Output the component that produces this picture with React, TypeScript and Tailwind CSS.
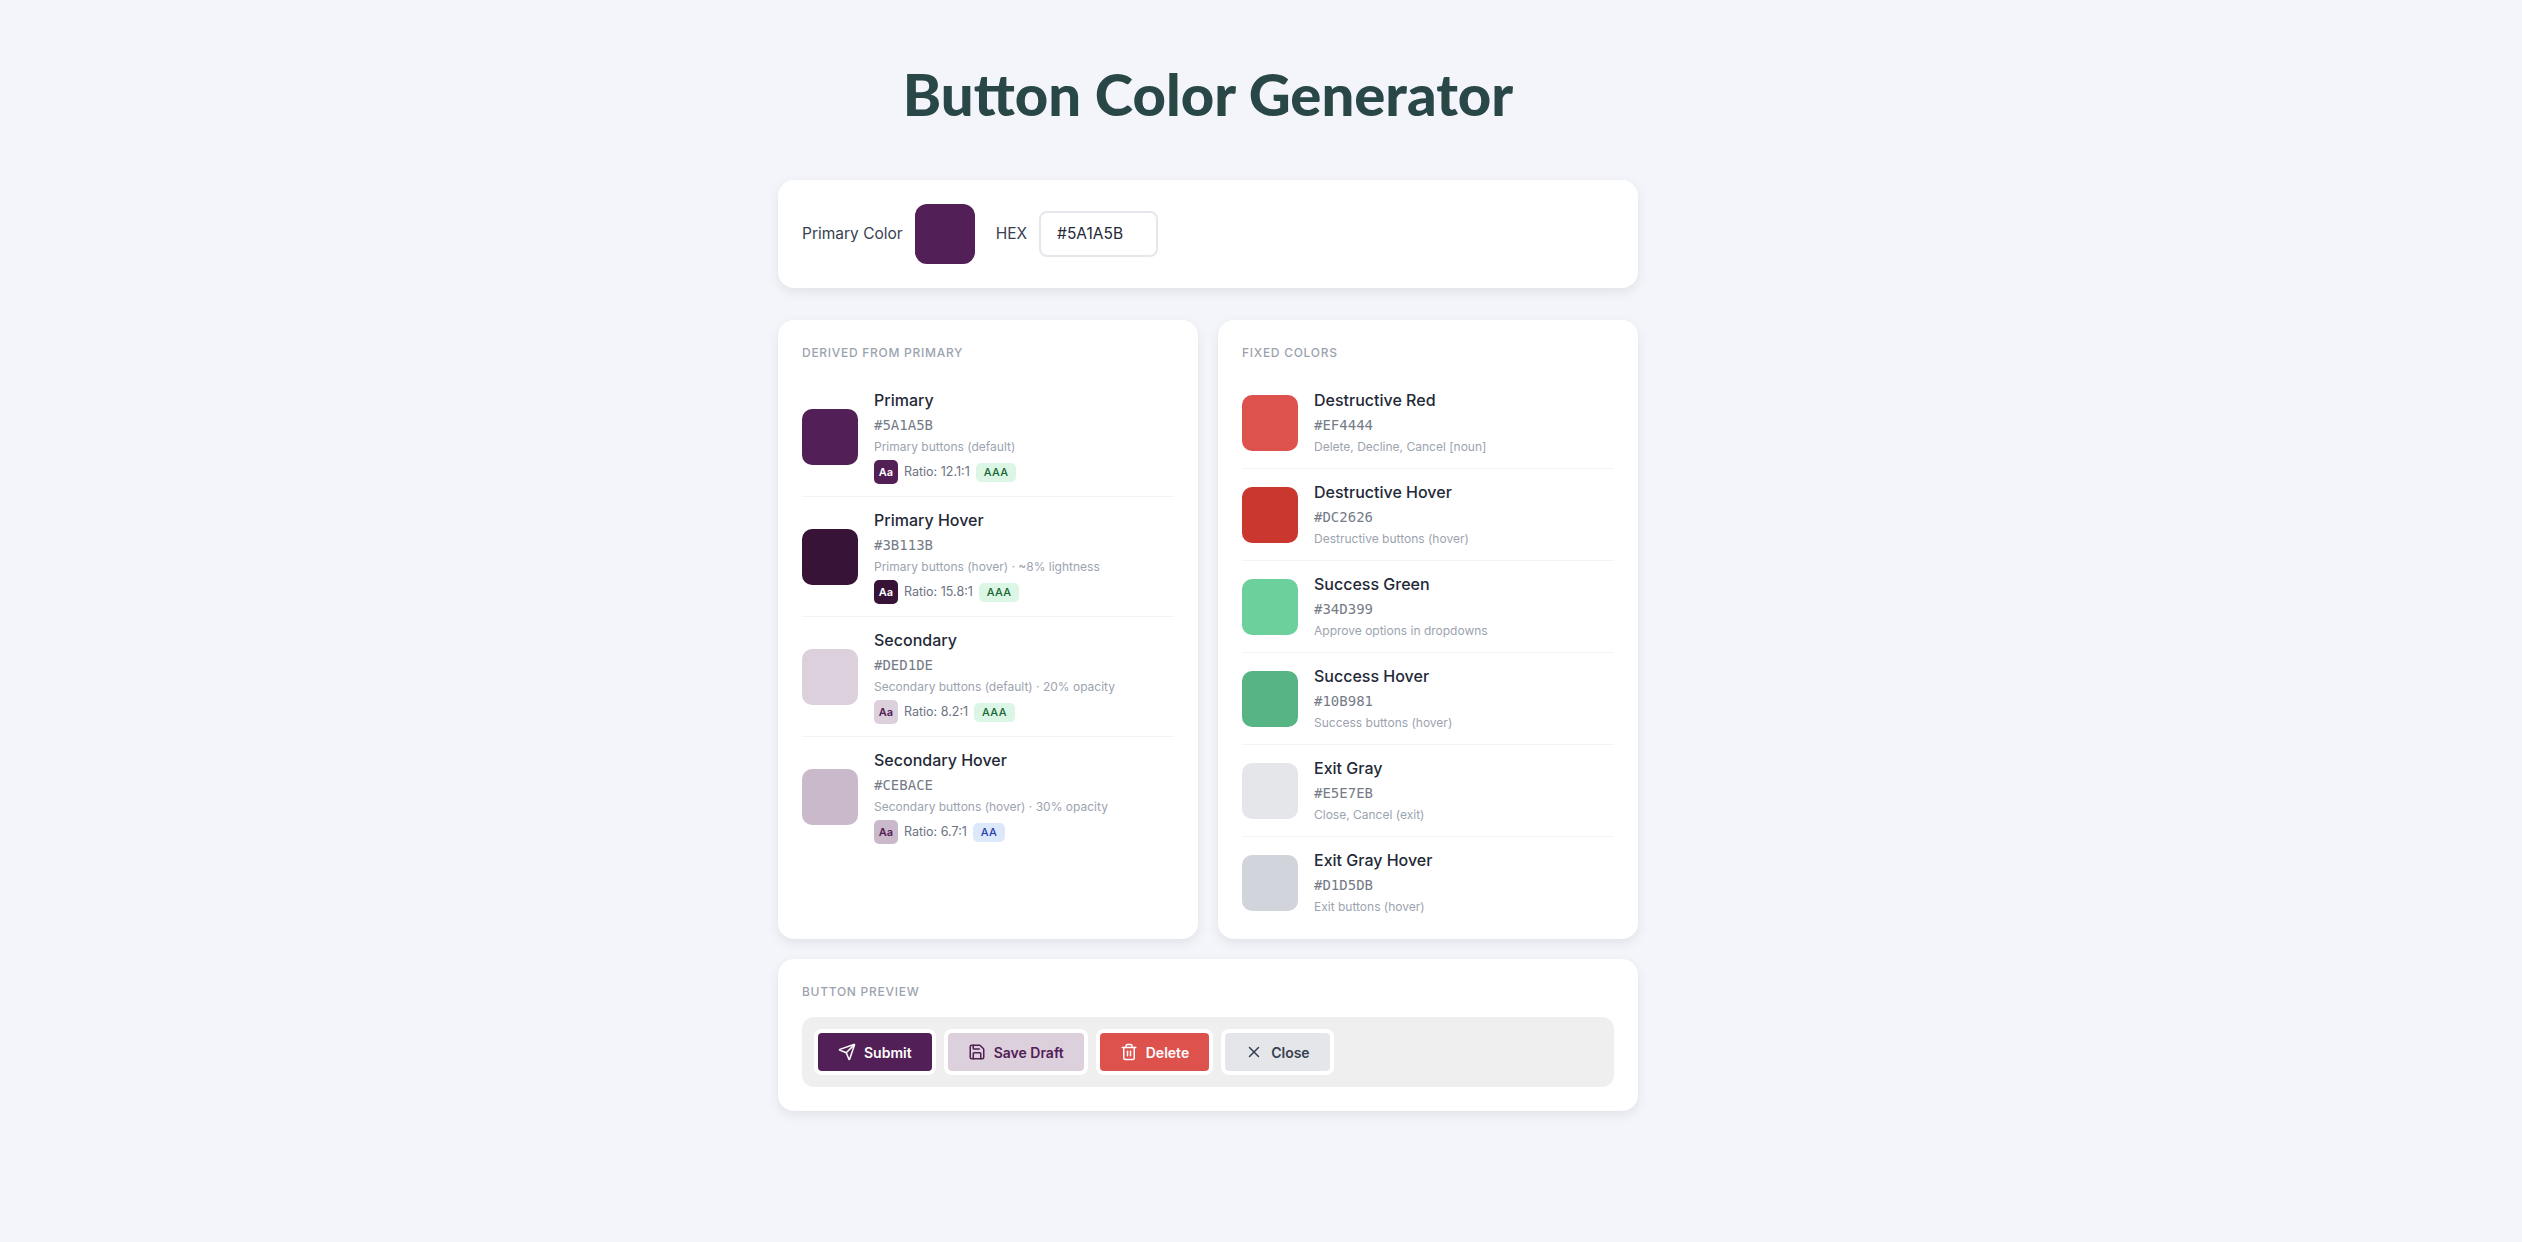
import { Send, Save, Trash2, X } from "lucide-react";

type Swatch = {
  name: string;
  hex: string;
  usage: string;
  color: string;
  ratio?: string;
  level?: "AAA" | "AA";
  aaText?: string;
};

const derived: Swatch[] = [
  { name: "Primary", hex: "#5A1A5B", usage: "Primary buttons (default)", color: "#522057", ratio: "12.1:1", level: "AAA", aaText: "#ffffff" },
  { name: "Primary Hover", hex: "#3B113B", usage: "Primary buttons (hover) · ~8% lightness", color: "#371338", ratio: "15.8:1", level: "AAA", aaText: "#ffffff" },
  { name: "Secondary", hex: "#DED1DE", usage: "Secondary buttons (default) · 20% opacity", color: "#DCD0DC", ratio: "8.2:1", level: "AAA", aaText: "#522057" },
  { name: "Secondary Hover", hex: "#CEBACE", usage: "Secondary buttons (hover) · 30% opacity", color: "#CAB9CA", ratio: "6.7:1", level: "AA", aaText: "#522057" },
];

const fixed: Swatch[] = [
  { name: "Destructive Red", hex: "#EF4444", usage: "Delete, Decline, Cancel [noun]", color: "#DE524E" },
  { name: "Destructive Hover", hex: "#DC2626", usage: "Destructive buttons (hover)", color: "#C9372F" },
  { name: "Success Green", hex: "#34D399", usage: "Approve options in dropdowns", color: "#6CD09D" },
  { name: "Success Hover", hex: "#10B981", usage: "Success buttons (hover)", color: "#57B585" },
  { name: "Exit Gray", hex: "#E5E7EB", usage: "Close, Cancel (exit)", color: "#E5E6EA" },
  { name: "Exit Gray Hover", hex: "#D1D5DB", usage: "Exit buttons (hover)", color: "#D2D4DB" },
];

function SwatchRow({ item }: { item: Swatch }) {
  return (
    <div className="flex items-center gap-4 border-b border-[#F3F4F6] py-3 last:border-b-0 last:pb-0">
      <div className="h-14 w-14 shrink-0 rounded-[10px]" style={{ backgroundColor: item.color }} />
      <div className="min-w-0">
        <div className="text-[16px] leading-[22px] font-medium text-[#1F2937]">{item.name}</div>
        <div className="mt-1 font-['DejaVu_Sans_Mono',monospace] text-[14px] leading-[20px] text-[#757B87]">{item.hex}</div>
        <div className="mt-[3px] text-[12px] leading-[18px] text-[#9CA3AF]">{item.usage}</div>
        {item.ratio && (
          <div className="mt-1 flex items-center gap-1.5">
            <span
              className="flex h-6 w-6 items-center justify-center rounded-[5px] text-[11px] font-semibold"
              style={{ backgroundColor: item.color, color: item.aaText }}
            >
              Aa
            </span>
            <span className="text-[12.5px] text-[#6B7280]">Ratio: {item.ratio}</span>
            <span
              className={
                item.level === "AAA"
                  ? "rounded-[5px] bg-[#DCF6E6] px-2 text-[11px] leading-[19px] font-medium tracking-[0.3px] text-[#166534]"
                  : "rounded-[5px] bg-[#DEE8FB] px-2 text-[11px] leading-[19px] font-medium tracking-[0.3px] text-[#1E40AF]"
              }
            >
              {item.level}
            </span>
          </div>
        )}
      </div>
    </div>
  );
}

function SectionLabel({ children }: { children: string }) {
  return <div className="text-[12px] leading-[18px] font-medium tracking-[0.06em] text-[#9CA3AF] uppercase">{children}</div>;
}

const card = "rounded-2xl bg-white p-6 shadow-[0_4px_12px_rgba(0,0,0,0.08)]";
const previewBtn = "flex h-[38px] items-center gap-2 rounded px-5 text-[14px] font-semibold ring-4 ring-white";

export default function App() {
  return (
    <div className="min-h-screen bg-[#F3F5FA] pt-[58px] pr-[106px] font-['Inter',sans-serif]">
      <h1 className="text-center font-['Lato',sans-serif] text-[58px] leading-[72px] font-black text-[#2A4747]">
        Button Color Generator
      </h1>

      <div className="mx-auto mt-[50px] w-[860px]">
        <div className={`${card} flex items-center`}>
          <span className="text-[15.5px] text-[#374151]">Primary Color</span>
          <div className="ml-3 h-[60px] w-[60px] rounded-xl bg-[#522057]" />
          <span className="ml-[21px] text-[15.5px] text-[#374151]">HEX</span>
          <div className="ml-3 flex h-[46px] w-[119px] items-center rounded-lg border-2 border-[#E6E6EC] px-4 text-[15.5px] text-[#1F2937]">
            #5A1A5B
          </div>
        </div>

        <div className="mt-8 grid grid-cols-2 gap-5">
          <div className={`${card} pb-[23px]`}>
            <SectionLabel>Derived from Primary</SectionLabel>
            <div className="mt-[15px]">
              {derived.map((item) => (
                <SwatchRow key={item.name} item={item} />
              ))}
            </div>
          </div>
          <div className={`${card} pb-[23px]`}>
            <SectionLabel>Fixed Colors</SectionLabel>
            <div className="mt-[15px]">
              {fixed.map((item) => (
                <SwatchRow key={item.name} item={item} />
              ))}
            </div>
          </div>
        </div>

        <div className={`${card} mt-5`}>
          <SectionLabel>Button Preview</SectionLabel>
          <div className="mt-4 flex h-[70px] items-center gap-4 rounded-xl bg-[#EFEFEF] px-4">
            <button className={`${previewBtn} bg-[#522057] text-white`}>
              <Send size={18} />
              Submit
            </button>
            <button className={`${previewBtn} bg-[#DCD0DC] text-[#522057]`}>
              <Save size={18} />
              Save Draft
            </button>
            <button className={`${previewBtn} bg-[#DE524E] text-white`}>
              <Trash2 size={18} />
              Delete
            </button>
            <button className={`${previewBtn} bg-[#E5E6EA] text-[#374151]`}>
              <X size={18} />
              Close
            </button>
          </div>
        </div>
      </div>
    </div>
  );
}
